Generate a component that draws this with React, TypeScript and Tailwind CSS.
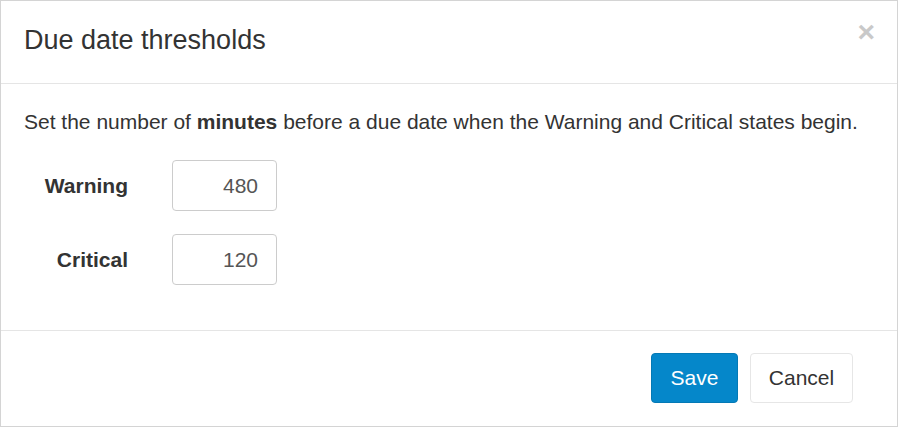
export default function App() {
  return (
    <div className="w-[898px] h-[427px] bg-white border border-[#d4d4d4] flex flex-col text-[#333] font-['Liberation_Sans',Arial,sans-serif]">
      {/* Header */}
      <div className="h-[83px] shrink-0 border-b border-[#e5e5e5] flex items-center justify-between pl-[23px] pr-[23px]">
        <h4 className="text-[27px] leading-none mt-[-3px]">Due date thresholds</h4>
        <button className="text-[30px] font-bold leading-none text-[#c9c9c9] mt-[-20px] mr-[-1px]">×</button>
      </div>

      {/* Body */}
      <div className="flex-1 pl-[23px] pt-[24px]">
        <p className="text-[21px] leading-[28px]">
          Set the number of <b>minutes</b> before a due date when the Warning and Critical states begin.
        </p>
        <div className="mt-[24px] flex flex-col gap-[23px]">
          <div className="flex items-center">
            <label className="w-[104px] text-right font-bold text-[21px]">Warning</label>
            <input
              defaultValue="480"
              className="ml-[44px] w-[105px] h-[51px] border border-[#ccc] rounded-[4px] text-right pr-[18px] text-[21px] text-[#555] outline-none"
            />
          </div>
          <div className="flex items-center">
            <label className="w-[104px] text-right font-bold text-[21px]">Critical</label>
            <input
              defaultValue="120"
              className="ml-[44px] w-[105px] h-[51px] border border-[#ccc] rounded-[4px] text-right pr-[18px] text-[21px] text-[#555] outline-none"
            />
          </div>
        </div>
      </div>

      {/* Footer */}
      <div className="h-[96px] shrink-0 border-t border-[#e5e5e5] flex justify-end items-start pt-[22px] pr-[44px] gap-[12px]">
        <button className="w-[87px] h-[50px] rounded-[4px] bg-[#0587ca] border border-[#0479b5] text-white text-[21px]">
          Save
        </button>
        <button className="w-[103px] h-[50px] rounded-[4px] bg-white border border-[#e6e6e6] text-[#333] text-[21px]">
          Cancel
        </button>
      </div>
    </div>
  );
}
